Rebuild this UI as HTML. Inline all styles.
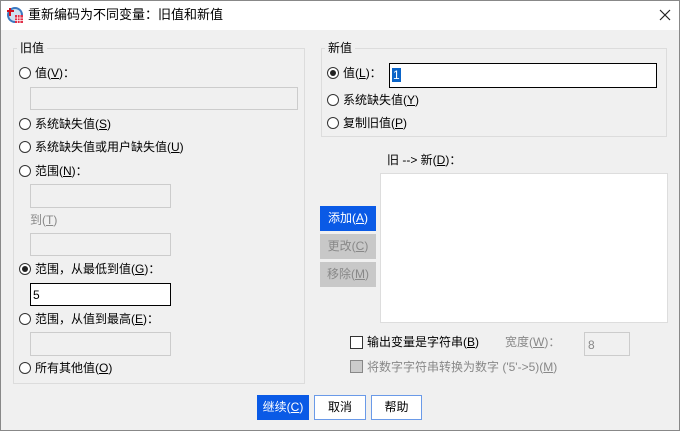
<!DOCTYPE html><html><head><meta charset="utf-8"><style>
*{box-sizing:border-box;margin:0;padding:0}
body{width:680px;height:431px;background:#f0f0f0;font-family:"Liberation Sans","Noto Sans CJK SC",sans-serif;font-size:12px;color:#000;position:relative;overflow:hidden}
.fr{position:absolute;left:0;top:0;width:680px;height:431px;border:1px solid #888;pointer-events:none}
.a{position:absolute;white-space:nowrap;line-height:14px}
.t{position:absolute;left:0;top:0;width:680px;height:30px;background:#fff}
.g{position:absolute;border:1px solid #dcdcdc}
.lg{position:absolute;background:#f0f0f0;padding:0 3px;line-height:14px}
.r{position:absolute;width:12px;height:12px;border:1px solid #333;border-radius:50%;background:#fff}
.r.on::after{content:"";position:absolute;left:2px;top:2px;width:6px;height:6px;border-radius:50%;background:#222}
.in{position:absolute;border:1px solid #ccc;background:#f0f0f0}
.u{text-decoration:underline}
.gr{color:#888}
.btn{position:absolute;text-align:center;line-height:22px;font-size:12px}
</style></head><body>
<div class="t"></div>
<svg class="a" style="left:6px;top:6px" width="18" height="18" viewBox="0 0 18 18"><circle cx="9" cy="9" r="8" fill="#3a78c0"/><circle cx="9" cy="9" r="6" fill="#cfe0f2"/><path d="M4 2v8M1 5h7" stroke="#d01020" stroke-width="2"/><rect x="9" y="9" width="8" height="8" fill="#e0304a"/><path d="M9 12h8M9 14.5h8M11.5 9v8M14 9v8" stroke="#fff" stroke-width=".7"/></svg>
<div class="a" style="left:28px;top:8px;font-size:13px">重新编码为不同变量：旧值和新值</div>
<svg class="a" style="left:659px;top:9px" width="12" height="12"><path d="M1 1L11 11M11 1L1 11" stroke="#222" stroke-width="1.2"/></svg>

<div class="g" style="left:13px;top:48px;width:292px;height:336px"></div>
<div class="lg" style="left:17px;top:41px">旧值</div>
<div class="r" style="left:19px;top:67px"></div><div class="a" style="left:35px;top:66px">值(<span class="u">V</span>)：</div>
<div class="in" style="left:30px;top:87px;width:268px;height:23px"></div>
<div class="r" style="left:19px;top:118px"></div><div class="a" style="left:35px;top:117px">系统缺失值(<span class="u">S</span>)</div>
<div class="r" style="left:19px;top:141px"></div><div class="a" style="left:35px;top:140px">系统缺失值或用户缺失值(<span class="u">U</span>)</div>
<div class="r" style="left:19px;top:165px"></div><div class="a" style="left:35px;top:164px">范围(<span class="u">N</span>)：</div>
<div class="in" style="left:30px;top:184px;width:141px;height:24px"></div>
<div class="a gr" style="left:30px;top:213px">到(<span class="u">T</span>)</div>
<div class="in" style="left:30px;top:233px;width:141px;height:23px"></div>
<div class="r on" style="left:19px;top:263px"></div><div class="a" style="left:35px;top:262px">范围，从最低到值(<span class="u">G</span>)：</div>
<div class="in" style="left:30px;top:283px;width:141px;height:23px;border-color:#000;background:#fff"><span class="a" style="left:2px;top:4px">5</span></div>
<div class="r" style="left:19px;top:313px"></div><div class="a" style="left:35px;top:312px">范围，从值到最高(<span class="u">E</span>)：</div>
<div class="in" style="left:30px;top:332px;width:141px;height:24px"></div>
<div class="r" style="left:19px;top:362px"></div><div class="a" style="left:35px;top:361px">所有其他值(<span class="u">O</span>)</div>

<div class="g" style="left:321px;top:48px;width:346px;height:89px"></div>
<div class="lg" style="left:325px;top:41px">新值</div>
<div class="r on" style="left:327px;top:67px"></div><div class="a" style="left:343px;top:66px">值(<span class="u">L</span>)：</div>
<div class="in" style="left:389px;top:63px;width:268px;height:25px;border-color:#000;background:#fff"><span class="a" style="left:2px;top:4px;background:#0a64c8;color:#fff;padding:0 1px">1</span></div>
<div class="r" style="left:327px;top:94px"></div><div class="a" style="left:343px;top:93px">系统缺失值(<span class="u">Y</span>)</div>
<div class="r" style="left:327px;top:117px"></div><div class="a" style="left:343px;top:116px">复制旧值(<span class="u">P</span>)</div>

<div class="a" style="left:387px;top:153px">旧 --&gt; 新(<span class="u">D</span>)：</div>
<div class="in" style="left:380px;top:173px;width:288px;height:150px;background:#fff;border-color:#ddd"></div>
<div class="btn" style="left:320px;top:206px;width:56px;height:25px;line-height:25px;background:#0a5ae6;color:#fff">添加(<span class="u">A</span>)</div>
<div class="btn" style="left:320px;top:234px;width:56px;height:25px;line-height:25px;background:#c8c8c8;color:#888">更改(<span class="u">C</span>)</div>
<div class="btn" style="left:320px;top:262px;width:56px;height:25px;line-height:25px;background:#c8c8c8;color:#888">移除(<span class="u">M</span>)</div>

<div class="a" style="left:350px;top:336px;width:13px;height:13px;border:1px solid #333;background:#fff"></div>
<div class="a" style="left:367px;top:335px">输出变量是字符串(<span class="u">B</span>)</div>
<div class="a gr" style="left:505px;top:335px">宽度(<span class="u">W</span>)：</div>
<div class="in" style="left:584px;top:332px;width:46px;height:24px"><span class="a gr" style="left:3px;top:5px">8</span></div>
<div class="a" style="left:350px;top:360px;width:13px;height:13px;border:1px solid #888;background:#ccc"></div>
<div class="a gr" style="left:367px;top:360px">将数字字符串转换为数字 ('5'-&gt;5)(<span class="u">M</span>)</div>

<div class="btn" style="left:257px;top:395px;width:52px;height:25px;line-height:25px;background:#0a5ae6;color:#fff">继续(<span class="u">C</span>)</div>
<div class="btn" style="left:314px;top:395px;width:52px;height:25px;background:#fff;border:1px solid #6a9ae8;line-height:23px">取消</div>
<div class="btn" style="left:371px;top:395px;width:51px;height:25px;background:#fff;border:1px solid #6a9ae8;line-height:23px">帮助</div>
<div class="fr"></div>
</body></html>
